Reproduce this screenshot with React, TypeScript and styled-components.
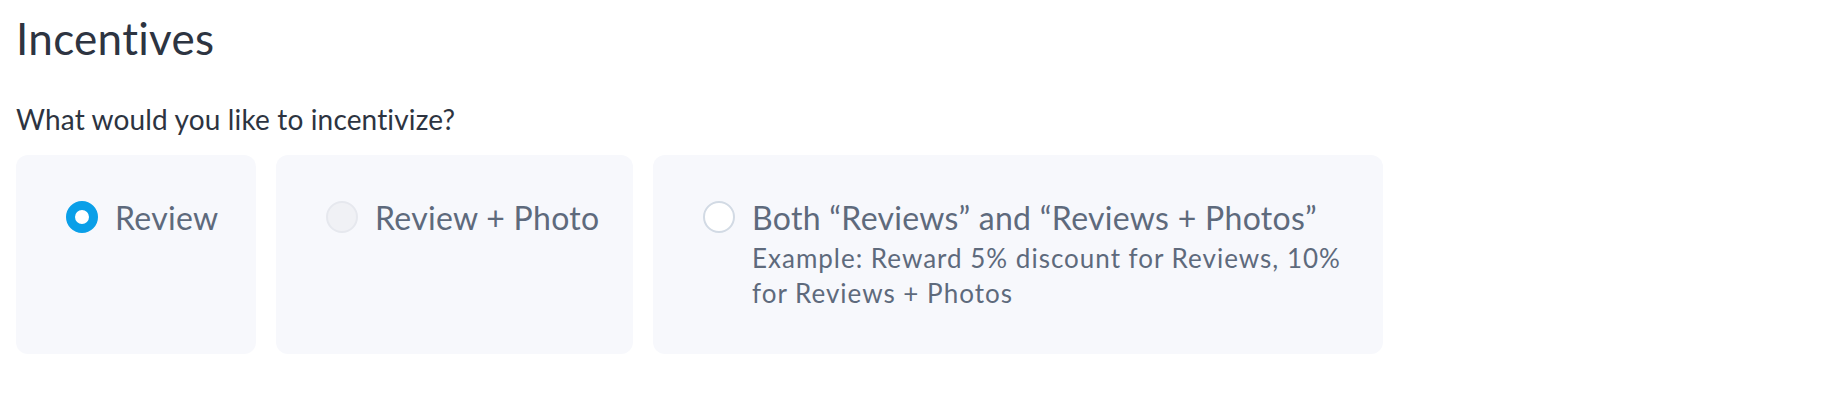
import styled, { createGlobalStyle } from 'styled-components';

const GlobalStyle = createGlobalStyle`
  body {
    margin: 0;
    background: #fff;
    font-family: Lato, 'Open Sans', sans-serif;
  }
`;

type Choice = {
  id: string;
  label: string;
  hint?: string;
  state: 'checked' | 'disabled' | 'idle';
  width: number;
};

const choices: Choice[] = [
  { id: 'review', label: 'Review', state: 'checked', width: 240 },
  { id: 'photo', label: 'Review + Photo', state: 'disabled', width: 357 },
  {
    id: 'both',
    label: 'Both \u201cReviews\u201d and \u201cReviews + Photos\u201d',
    hint: 'Example: Reward 5% discount for Reviews, 10% for Reviews + Photos',
    state: 'idle',
    width: 730,
  },
];

export default function App() {
  return (
    <>
      <GlobalStyle />
      <Section>
        <Heading>Incentives</Heading>
        <Question>What would you like to incentivize?</Question>
        <Options>
          {choices.map((c) => (
            <Card key={c.id} $width={c.width}>
              <Radio $state={c.state} />
              <Body>
                <Label>{c.label}</Label>
                {c.hint && <Hint>{c.hint}</Hint>}
              </Body>
            </Card>
          ))}
        </Options>
      </Section>
    </>
  );
}

const Section = styled.section`
  padding: 12px 16px 0;
  display: flex;
  flex-direction: column;
  align-items: flex-start;
`;

const Heading = styled.h2`
  margin: 0 0 38px;
  font-size: 44px;
  line-height: 52px;
  font-weight: 400;
  letter-spacing: 0.3px;
  color: #2d3441;
`;

const Question = styled.p`
  margin: 0 0 19px;
  font-size: 28px;
  line-height: 34px;
  letter-spacing: 0.15px;
  color: #2d3441;
`;

const Options = styled.div`
  display: flex;
  gap: 20px;
`;

const Card = styled.label<{ $width: number }>`
  width: ${(p) => p.$width}px;
  height: 199px;
  box-sizing: border-box;
  padding: 43px 40px 0 50px;
  background: #f7f8fc;
  border-radius: 12px;
  display: flex;
  align-items: flex-start;
  gap: 17px;
`;

const Radio = styled.span<{ $state: Choice['state'] }>`
  flex: none;
  width: 32px;
  height: 32px;
  margin-top: 3px;
  box-sizing: border-box;
  border-radius: 50%;
  background: ${(p) => (p.$state === 'disabled' ? '#f0f1f5' : '#fff')};
  border: ${(p) =>
    p.$state === 'checked'
      ? '9px solid #0a9fe8'
      : p.$state === 'disabled'
      ? '2px solid #e6e8ee'
      : '2px solid #d2dae4'};
`;

const Body = styled.div`
  display: flex;
  flex-direction: column;
  gap: 3px;
`;

const Label = styled.span`
  font-size: 32px;
  line-height: 40px;
  letter-spacing: 0.3px;
  white-space: nowrap;
  color: #5e6a7c;
`;

const Hint = styled.span`
  font-size: 26px;
  line-height: 35px;
  letter-spacing: 1px;
  color: #5e6a7c;
`;
